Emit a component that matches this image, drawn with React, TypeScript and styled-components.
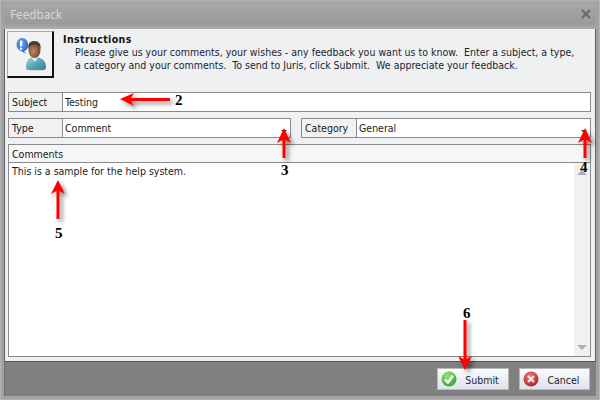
import React from "react"
import styled, { createGlobalStyle } from "styled-components"

const GlobalStyle = createGlobalStyle`
  html, body {
    margin: 0;
    padding: 0;
    background: #fff;
  }
  body {
    font-family: "DejaVu Sans", "Liberation Sans", sans-serif;
    font-stretch: condensed;
    font-size: 10.5px;
    color: #1a1a1a;
  }
`

const Page = styled.div`
  position: relative;
  width: 600px;
  height: 400px;
  overflow: hidden;
`

const Window = styled.div`
  display: flex;
  flex-direction: column;
  box-sizing: border-box;
  width: 600px;
  height: 400px;
  padding: 0 3px 3px 3px;
  background: #a3a3a3;
  border-top: 1px solid #b0b0b0;
  border-left: 1px solid #b5b5b5;
  border-right: 1px solid #b5b5b5;
  border-bottom: 1px solid #b0b0b0;
`

const TitleBar = styled.div`
  display: flex;
  align-items: center;
  justify-content: space-between;
  height: 28px;
  padding: 0 5px 3px 6px;
  box-sizing: border-box;
  background: linear-gradient(#a8a8a8, #9b9b9b 80%, #adadad);
`

const TitleText = styled.span`
  font-family: "Noto Sans", sans-serif;
  font-stretch: normal;
  font-size: 11.7px;
  color: #d6d6d6;
`

const Panel = styled.div`
  flex: 1;
  display: flex;
  flex-direction: column;
  padding: 2px 4px 4px 3px;
  background: #eef0f2;
  border-left: 1px solid #5c6068;
  border-right: 1px solid #5c6068;
  min-height: 0;
`

const InfoRow = styled.div`
  display: flex;
  height: 47px;
  margin-bottom: 14px;
`

const IconButton = styled.div`
  display: flex;
  align-items: center;
  justify-content: center;
  flex: none;
  box-sizing: border-box;
  width: 47px;
  height: 47px;
  margin-left: -1px;
  background: #f0f2f4;
  border: 1px solid #a8a8a8;
  border-right: 2px solid #111;
  border-bottom: 2px solid #111;
`

const Instructions = styled.div`
  margin-left: 9px;
  line-height: 13px;
  padding-top: 2px;
`

const InstructionsTitle = styled.div`
  font-weight: 700;
  letter-spacing: 0.4px;
  color: #111;
`

const InstructionsBody = styled.div`
  padding-left: 12px;
  white-space: pre;
  color: #1c2430;
`

const FieldRow = styled.div`
  display: flex;
  justify-content: space-between;
  margin-bottom: 6px;
`

const Field = styled.div<{ $width: number }>`
  display: flex;
  box-sizing: border-box;
  width: ${(p) => p.$width}px;
  height: 20px;
  background: #fff;
  border: 1px solid #8a8a8a;
`

const FieldLabel = styled.div<{ $width: number }>`
  display: flex;
  align-items: center;
  box-sizing: border-box;
  width: ${(p) => p.$width}px;
  padding: 0 0 1px 3px;
  background: #eff1f3;
  border-right: 1px solid #8a8a8a;
`

const FieldValue = styled.div`
  position: relative;
  flex: 1;
  display: flex;
  align-items: center;
  padding: 0 0 1px 2px;
`

const Caret = styled.span`
  position: absolute;
  right: 3px;
  bottom: 4px;
  width: 0;
  height: 0;
  border-left: 3px solid transparent;
  border-right: 3px solid transparent;
  border-top: 3px solid #333;
`

const CommentsBox = styled.div`
  flex: 1;
  display: flex;
  flex-direction: column;
  min-height: 0;
  background: #fff;
  border: 1px solid #8a8a8a;
`

const CommentsHeader = styled.div`
  display: flex;
  align-items: center;
  height: 18px;
  padding: 0 0 0 3px;
  box-sizing: border-box;
  background: #f6f6f6;
  border-bottom: 1px solid #8a8a8a;
`

const CommentsBody = styled.div`
  flex: 1;
  display: flex;
  min-height: 0;
`

const CommentsText = styled.div`
  flex: 1;
  padding: 2px 3px;
  line-height: 13px;
`

const ScrollBar = styled.div`
  display: flex;
  flex-direction: column;
  align-items: center;
  justify-content: space-between;
  box-sizing: border-box;
  width: 16px;
  padding: 7px 0 6px;
  background: #f1f1f1;
`

const ScrollArrow = styled.span<{ $up?: boolean }>`
  width: 0;
  height: 0;
  border-left: 5px solid transparent;
  border-right: 5px solid transparent;
  ${(p) => (p.$up ? "border-bottom" : "border-top")}: 5px solid #a9aec8;
`

const Footer = styled.div`
  display: flex;
  justify-content: flex-end;
  align-items: flex-start;
  gap: 10px;
  height: 35px;
  padding: 6px 6px 0 0;
  box-sizing: border-box;
  background: #808080;
  border-top: 1px solid #4f5660;
  border-left: 1px solid #6f6f6f;
`

const Button = styled.div<{ $width: number }>`
  display: flex;
  align-items: center;
  box-sizing: border-box;
  width: ${(p) => p.$width}px;
  height: 22px;
  padding-left: 3px;
  background: linear-gradient(#fafbfc, #e9edf2 55%, #dfe4ea);
  border: 1px solid #b8b8b8;
`

const ButtonLabel = styled.span`
  flex: 1;
  text-align: center;
  padding: 1px 7px 0 6px;
  color: #1c2430;
`

const CloseGlyph = styled.svg`
  display: block;
`

const Overlay = styled.svg`
  position: absolute;
  left: 0;
  top: 0;
  pointer-events: none;
`

const Callout = styled.text`
  font-family: "Liberation Serif", serif;
  font-stretch: normal;
  font-size: 15px;
  font-weight: 700;
  fill: #000;
`

function PersonIcon() {
  return (
    <svg width="34" height="34" viewBox="0 0 34 34">
      <defs>
        <linearGradient id="shirt" x1="0" y1="0" x2="1" y2="1">
          <stop offset="0" stopColor="#a6dcdc" />
          <stop offset="0.5" stopColor="#5aaab4" />
          <stop offset="1" stopColor="#2f7f90" />
        </linearGradient>
        <radialGradient id="bubble" cx="0.4" cy="0.3" r="0.8">
          <stop offset="0" stopColor="#6ea6ee" />
          <stop offset="1" stopColor="#1a55b8" />
        </radialGradient>
        <radialGradient id="face" cx="0.4" cy="0.55" r="0.65">
          <stop offset="0" stopColor="#c08a68" />
          <stop offset="1" stopColor="#6e3d28" />
        </radialGradient>
      </defs>
      <ellipse cx="23" cy="32" rx="10" ry="1.800" fill="#d0d3d6" />
      <path d="M16 33c-2 0-3-1-3-3 0-6 2-9 6-10h5c5 1 9 4 9 10 0 2-1 3-3 3z" fill="url(#shirt)" />
      <path d="M18 20l4 5 3-5z" fill="#e4f4f4" />
      <ellipse cx="21.500" cy="13.500" rx="6" ry="7.500" fill="url(#face)" />
      <path d="M15.500 12c-1-6 2-8 6-8s7 3 6 8c-1-3-3-4.500-6-4.500s-5 1.500-6 4.500z" fill="#4a3a34" />
      <path d="M8 1a7 7 0 0 1 3 13.400l2.500 2.600-5.500-3A7 7 0 0 1 8 1z" fill="url(#bubble)" />
      <rect x="7" y="3.500" width="2.200" height="6" rx="1" fill="#fff" />
      <circle cx="8.100" cy="11.800" r="1.300" fill="#fff" />
    </svg>
  )
}

function SubmitIcon() {
  return (
    <svg width="16" height="16" viewBox="0 0 16 16">
      <defs>
        <radialGradient id="ok" cx="0.4" cy="0.3" r="0.8">
          <stop offset="0" stopColor="#9ee27a" />
          <stop offset="1" stopColor="#2f9e2c" />
        </radialGradient>
      </defs>
      <circle cx="8" cy="8" r="7.500" fill="url(#ok)" />
      <path d="M4 8.500l3 3 5-7" fill="none" stroke="#fff" strokeWidth="2.400" />
    </svg>
  )
}

function CancelIcon() {
  return (
    <svg width="16" height="16" viewBox="0 0 16 16">
      <defs>
        <radialGradient id="no" cx="0.4" cy="0.3" r="0.8">
          <stop offset="0" stopColor="#e8787a" />
          <stop offset="1" stopColor="#a81c22" />
        </radialGradient>
      </defs>
      <circle cx="8" cy="8" r="7.500" fill="url(#no)" />
      <path d="M5 5l6 6M11 5l-6 6" fill="none" stroke="#f4e8e8" strokeWidth="2.200" />
    </svg>
  )
}

export default function App() {
  return (
    <Page>
      <GlobalStyle />
      <Window>
        <TitleBar>
          <TitleText>Feedback</TitleText>
          <CloseGlyph width="10" height="10" viewBox="0 0 10 10">
            <path d="M1 1l8 8M9 1l-8 8" stroke="#6c6c6c" strokeWidth="2.400" />
          </CloseGlyph>
        </TitleBar>
        <Panel>
          <InfoRow>
            <IconButton>
              <PersonIcon />
            </IconButton>
            <Instructions>
              <InstructionsTitle>Instructions</InstructionsTitle>
              <InstructionsBody>
                {"Please give us your comments, your wishes - any feedback you want us to know.  Enter a subject, a type,\na category and your comments.  To send to Juris, click Submit.  We appreciate your feedback."}
              </InstructionsBody>
            </Instructions>
          </InfoRow>
          <FieldRow>
            <Field $width={583}>
              <FieldLabel $width={54}>Subject</FieldLabel>
              <FieldValue>Testing</FieldValue>
            </Field>
          </FieldRow>
          <FieldRow>
            <Field $width={283}>
              <FieldLabel $width={54}>Type</FieldLabel>
              <FieldValue>
                Comment
                <Caret />
              </FieldValue>
            </Field>
            <Field $width={290}>
              <FieldLabel $width={55}>Category</FieldLabel>
              <FieldValue>
                General
                <Caret />
              </FieldValue>
            </Field>
          </FieldRow>
          <CommentsBox>
            <CommentsHeader>Comments</CommentsHeader>
            <CommentsBody>
              <CommentsText>This is a sample for the help system.</CommentsText>
              <ScrollBar>
                <ScrollArrow $up />
                <ScrollArrow />
              </ScrollBar>
            </CommentsBody>
          </CommentsBox>
        </Panel>
        <Footer>
          <Button $width={72}>
            <SubmitIcon />
            <ButtonLabel>Submit</ButtonLabel>
          </Button>
          <Button $width={71}>
            <CancelIcon />
            <ButtonLabel>Cancel</ButtonLabel>
          </Button>
        </Footer>
      </Window>
      <Overlay width="600" height="400" viewBox="0 0 600 400">
        <defs>
          <filter id="arrowShadow" x="-50%" y="-50%" width="200%" height="200%">
            <feDropShadow dx="3" dy="3" stdDeviation="2" floodColor="#000" floodOpacity="0.45" />
          </filter>
        </defs>
        <g fill="#f00" filter="url(#arrowShadow)">
          <path d="M120 99l14-6-3 5h39v3h-39l3 5z" />
          <path d="M284 128l7 15-5.500-3v18h-3v-18l-5.500 3z" />
          <path d="M585 128l7 15-5.500-3v18h-3v-18l-5.500 3z" />
          <path d="M58 180l7 14-5.500-3v28h-3v-28l-5.500 3z" />
          <path d="M465 370l-7-14 5.500 3v-39h3v39l5.500-3z" />
        </g>
        <Callout x="175" y="105">2</Callout>
        <Callout x="281" y="175">3</Callout>
        <Callout x="580" y="172">4</Callout>
        <Callout x="55" y="238">5</Callout>
        <Callout x="463" y="318">6</Callout>
      </Overlay>
    </Page>
  )
}
